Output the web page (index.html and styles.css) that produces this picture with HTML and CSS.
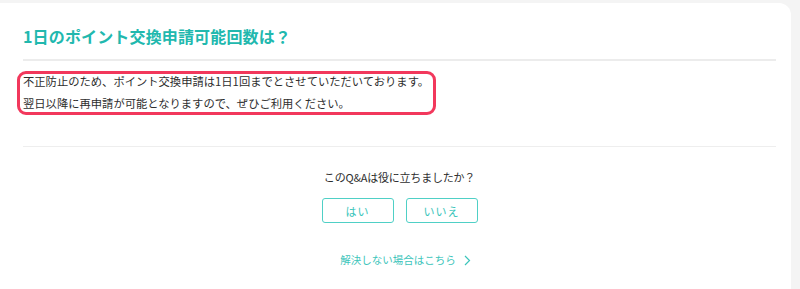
FILE: index.html
```html
<!DOCTYPE html>
<html lang="ja">
<head>
<meta charset="utf-8">
<link rel="stylesheet" href="styles.css">
</head>
<body>
<div class="page">
  <div class="card">
    <h1 class="title">1日のポイント交換申請可能回数は？</h1>
    <hr class="rule rule-top">
    <p class="answer">不正防止のため、ポイント交換申請は1日1回までとさせていただいております。<br>翌日以降に再申請が可能となりますので、ぜひご利用ください。</p>
    <hr class="rule rule-bottom">
    <div class="feedback">
      <p class="question">このQ&amp;Aは役に立ちましたか？</p>
      <div class="buttons">
        <button class="btn">はい</button>
        <button class="btn">いいえ</button>
      </div>
      <a class="more" href="#">解決しない場合はこちら<svg class="chev" width="7" height="11" viewBox="0 0 7 11"><path d="M1 1 L5.5 5.5 L1 10" fill="none" stroke="currentColor" stroke-width="1.2"/></svg></a>
    </div>
  </div>
</div>
</body>
</html>
```
FILE: styles.css
```css
html, body {
  margin: 0;
  padding: 0;
}
body {
  background: #f4f4f4;
  font-family: "Noto Sans CJK JP", "Noto Sans", sans-serif;
  color: #2e2e2e;
}
.page {
  padding: 3px 9px 0 0;
  height: 286px;
  overflow: hidden;
}
.card {
  background: #fff;
  border-radius: 0 12px 0 0;
  padding: 21px 15px 40px 23px;
  height: 400px;
}
.title {
  margin: 0;
  font-size: 16px;
  line-height: 24px;
  font-weight: 700;
  color: #21b8ae;
  letter-spacing: 0.15px;
}
.rule {
  border: 0;
  margin: 0;
}
.rule-top {
  margin-top: 11px;
  height: 2px;
  background: #ececec;
}
.answer {
  position: relative;
  width: fit-content;
  margin: 9px 0 0 0;
  font-size: 11.3px;
  line-height: 22px;
  letter-spacing: 0;
}
.answer::after {
  content: "";
  position: absolute;
  left: -6px;
  right: -7px;
  top: 1px;
  bottom: -1px;
  border: 3px solid #f2385c;
  border-radius: 9px;
}
.rule-bottom {
  margin-top: 32px;
  height: 1px;
  background: #eeeeee;
}
.feedback {
  display: flex;
  flex-direction: column;
  align-items: center;
}
.question {
  margin: 21px 0 0 0;
  font-size: 11px;
  line-height: 18px;
  letter-spacing: -0.2px;
}
.buttons {
  display: flex;
  gap: 12px;
  margin-top: 12px;
}
.btn {
  width: 72px;
  height: 25px;
  box-sizing: border-box;
  background: #fff;
  border: 1.5px solid #4fd0c6;
  border-radius: 3px;
  color: #3cc5bb;
  font-family: inherit;
  font-size: 11px;
  padding: 0;
  letter-spacing: 1px;
}
.more {
  margin-top: 28px;
  display: flex;
  align-items: center;
  gap: 8px;
  font-size: 10.5px;
  line-height: 18px;
  color: #3cc5bb;
  text-decoration: none;
  letter-spacing: 0;
  padding-left: 12px;
}
.chev {
  display: block;
}
```
